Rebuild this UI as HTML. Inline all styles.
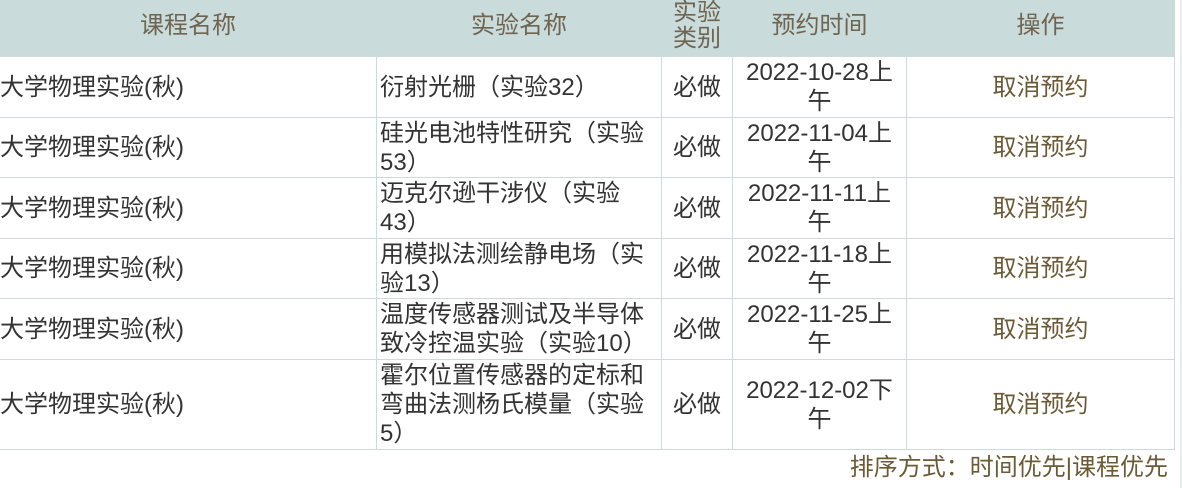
<!DOCTYPE html>
<html><head><meta charset="utf-8"><style>
body{margin:0;width:1182px;height:488px;overflow:hidden;background:#fff;font-family:"Liberation Sans","Noto Sans CJK SC",sans-serif;font-size:24px;color:#333;position:relative}
table{position:absolute;left:-1px;top:-1px;border-collapse:collapse;table-layout:fixed;width:1175px}
td,th{border:1px solid #cddada;padding:0;line-height:29px;vertical-align:middle;overflow:hidden}
th{background:#c9dbdb;color:#6f6450;font-weight:normal;height:51px;line-height:26px;padding-bottom:4px;box-sizing:content-box}
td.c{text-align:center}
td.l{text-align:left}
.op{color:#6b5a35}
.vl{position:absolute;left:1180px;top:0;width:2px;height:488px;background:#e4ecec}
.sort{position:absolute;right:14px;top:453px;color:#6b5a35;line-height:29px}
</style></head><body>
<div class="vl"></div>
<table>
<colgroup><col style="width:377px"><col style="width:285px"><col style="width:71px"><col style="width:174px"><col style="width:268px"></colgroup>
<tr><th>课程名称</th><th>实验名称</th><th>实验<br>类别</th><th>预约时间</th><th>操作</th></tr>
<tr style="height:61px"><td class="l">大学物理实验(秋)</td><td class="l" style="padding-left:3px">衍射光栅（实验32）</td><td class="c">必做</td><td class="c">2022-10-28上<br>午</td><td class="c op">取消预约</td></tr>
<tr style="height:60px"><td class="l">大学物理实验(秋)</td><td class="l" style="padding-left:3px">硅光电池特性研究（实验<br>53）</td><td class="c">必做</td><td class="c">2022-11-04上<br>午</td><td class="c op">取消预约</td></tr>
<tr style="height:61px"><td class="l">大学物理实验(秋)</td><td class="l" style="padding-left:3px">迈克尔逊干涉仪（实验<br>43）</td><td class="c">必做</td><td class="c">2022-11-11上<br>午</td><td class="c op">取消预约</td></tr>
<tr style="height:60px"><td class="l">大学物理实验(秋)</td><td class="l" style="padding-left:3px">用模拟法测绘静电场（实<br>验13）</td><td class="c">必做</td><td class="c">2022-11-18上<br>午</td><td class="c op">取消预约</td></tr>
<tr style="height:61px"><td class="l">大学物理实验(秋)</td><td class="l" style="padding-left:3px">温度传感器测试及半导体<br>致冷控温实验（实验10）</td><td class="c">必做</td><td class="c">2022-11-25上<br>午</td><td class="c op">取消预约</td></tr>
<tr style="height:90px"><td class="l">大学物理实验(秋)</td><td class="l" style="padding-left:3px">霍尔位置传感器的定标和<br>弯曲法测杨氏模量（实验<br>5）</td><td class="c">必做</td><td class="c">2022-12-02下<br>午</td><td class="c op">取消预约</td></tr>
</table>
<div class="sort">排序方式：时间优先|课程优先</div>
</body></html>
